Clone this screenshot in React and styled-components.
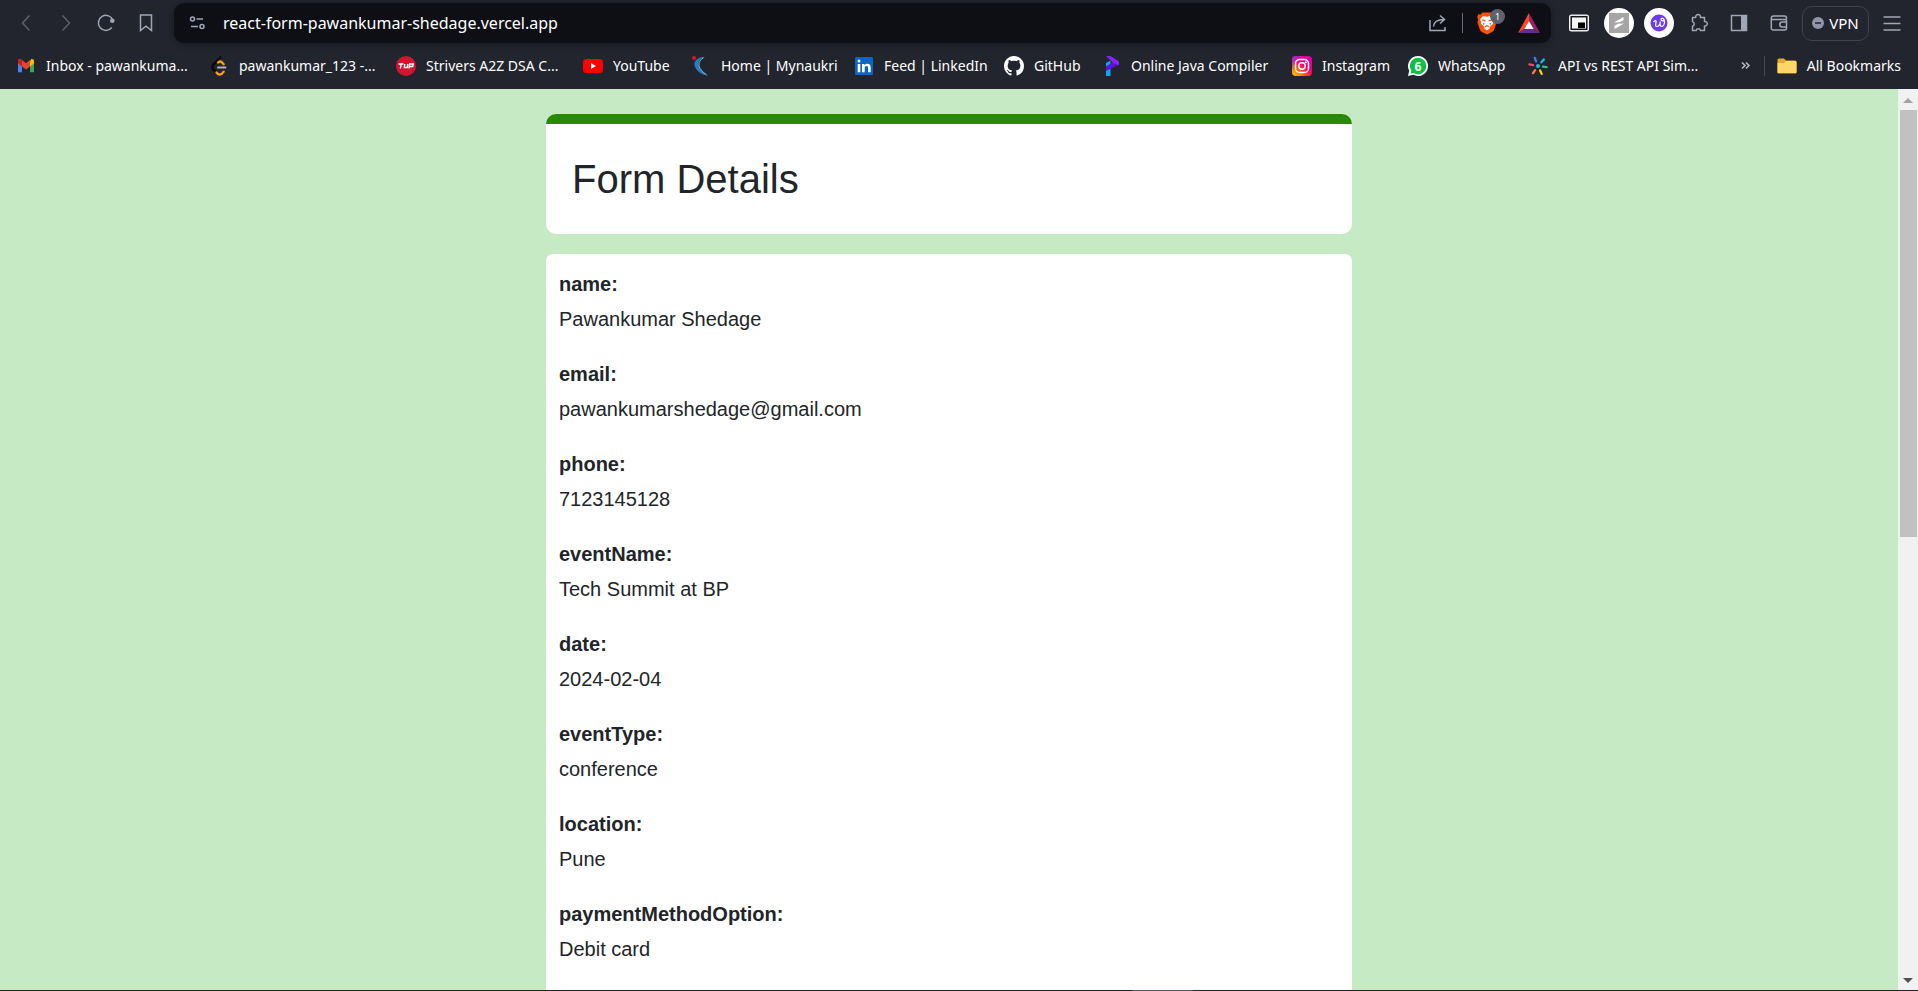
import React from "react";
import styled, { createGlobalStyle } from "styled-components";

const GlobalStyle = createGlobalStyle`
  * { box-sizing: border-box; }
  body {
    margin: 0;
    background: #c6eac4;
    color: #212529;
    font-family: "Liberation Sans", Arial, sans-serif;
  }
  button, input { font: inherit; color: inherit; }
`;

const Screen = styled.div`
  display: flex;
  flex-direction: column;
  height: 100vh;
  overflow: hidden;
`;

/* Browser chrome */

const Chrome = styled.header`
  flex: none;
  display: flex;
  flex-direction: column;
  height: 89px;
  background: #22252d;
  color: #fff;
  font-family: "Noto Sans", "Open Sans", sans-serif;
`;

const Toolbar = styled.div`
  display: flex;
  align-items: center;
  height: 46px;
  padding: 0 6px;
`;

const IconButton = styled.button`
  flex: none;
  display: flex;
  align-items: center;
  justify-content: center;
  width: ${(p) => p.$width || 40}px;
  height: 36px;
  padding: 0;
  border: 0;
  background: none;
  color: ${(p) => (p.$dim ? "#5c6069" : "#a0a6b5")};
`;

const AddressBar = styled.div`
  flex: 1;
  display: flex;
  align-items: center;
  height: 40px;
  margin: 0 8px;
  border-radius: 10px;
  background: #0d0f14;
  box-shadow: 0 1px 6px rgba(0, 0, 0, 0.4);
`;

const AddressInput = styled.input`
  flex: 1;
  min-width: 0;
  padding: 0;
  border: 0;
  outline: 0;
  background: none;
  font-size: 16px;
  line-height: 24px;
`;

const Divider = styled.span`
  flex: none;
  width: 1px;
  height: ${(p) => p.$height}px;
  margin: 0 ${(p) => p.$gap}px;
  background: ${(p) => p.$color};
`;

const ShieldButton = styled(IconButton)`
  position: relative;
`;

const Badge = styled.span`
  position: absolute;
  top: 4px;
  right: 2px;
  width: 15px;
  height: 15px;
  border-radius: 50%;
  background: #5e616e;
  color: #fff;
  font-size: 9px;
  line-height: 15px;
  text-align: center;
`;

const ExtensionDisc = styled.span`
  display: flex;
  align-items: center;
  justify-content: center;
  width: 30px;
  height: 30px;
  border-radius: 50%;
  background: #fff;
`;

const VpnButton = styled.button`
  flex: none;
  display: flex;
  align-items: center;
  justify-content: center;
  gap: 5px;
  width: 67px;
  height: 35px;
  margin: 0 3px;
  padding: 0;
  border: 1px solid #3f434d;
  border-radius: 10px;
  background: none;
  font-size: 15px;
`;

const BookmarksBar = styled.nav`
  display: flex;
  align-items: center;
  height: 40px;
  padding: 0 17px 0 16px;
  font-size: 14px;
  line-height: 20px;
`;

const BookmarkLink = styled.a`
  flex: none;
  display: flex;
  align-items: center;
  gap: 10px;
  width: ${(p) => (p.$width ? `${p.$width}px` : "auto")};
  color: inherit;
  text-decoration: none;
  white-space: nowrap;
  svg { flex: none; }
`;

const Spacer = styled.span`
  flex: 1;
`;

/* Page */

const Viewport = styled.div`
  flex: 1;
  display: flex;
  min-height: 0;
`;

const Page = styled.main`
  flex: 1;
  display: flex;
  flex-direction: column;
  align-items: center;
  gap: 20px;
  padding: 25px 16px 0;
  overflow: hidden;
  background: #c6eac4;
`;

const TitleCard = styled.section`
  flex: none;
  width: 100%;
  max-width: 806px;
  padding: 31px 26px;
  border-top: 10px solid #288a07;
  border-radius: 10px;
  background: #fff;
`;

const Title = styled.h1`
  margin: 0;
  font-size: 40px;
  font-weight: 400;
  line-height: 48px;
`;

const DetailsCard = styled.dl`
  flex: none;
  width: 100%;
  max-width: 806px;
  margin: 0;
  padding: 15px 13px 70px;
  border-radius: 7px;
  background: #fff;
  font-size: 20px;
  line-height: 30px;
`;

const Field = styled.div`
  margin-bottom: 25px;
`;

const FieldName = styled.dt`
  margin-bottom: 5px;
  font-weight: 700;
`;

const FieldValue = styled.dd`
  margin: 0;
`;

const ScrollTrack = styled.div`
  flex: none;
  display: flex;
  flex-direction: column;
  align-items: center;
  width: 20px;
  background: #f1f1f1;
`;

const ScrollButton = styled.button`
  display: flex;
  align-items: center;
  justify-content: center;
  width: 20px;
  height: 21px;
  padding: 0;
  border: 0;
  background: none;
  color: ${(p) => (p.$dim ? "#a3a3a3" : "#505050")};
`;

const ScrollArea = styled.div`
  flex: 1;
  width: 17px;
`;

const ScrollThumb = styled.div`
  height: calc(50% - 3px);
  background: #c1c1c1;
`;

const TaskbarEdge = styled.footer`
  flex: none;
  display: flex;
  height: 1px;
  background: #202225;
`;

const TaskbarActive = styled.span`
  width: 61px;
  margin-left: 59%;
  background: #55575a;
`;

const Svg = ({ size = 20, children, ...rest }) => (
  <svg width={size} height={size} viewBox={`0 0 ${size} ${size}`} fill="none" aria-hidden="true" {...rest}>
    {children}
  </svg>
);

const line = { stroke: "currentColor", strokeWidth: 1.5, fill: "none" };

const BackIcon = () => <Svg><path d="M13.5 2.5 6.5 10l7 7.5" {...line} /></Svg>;
const ForwardIcon = () => <Svg><path d="M6.5 2.5l7 7.5-7 7.5" {...line} /></Svg>;
const ReloadIcon = () => (
  <Svg>
    <path d="M15.8 14.5A7.5 7.5 0 1 1 17 7.5" {...line} />
    <circle cx="16.3" cy="7.8" r="2.3" fill="currentColor" />
  </Svg>
);
const SaveIcon = () => <Svg><path d="M4.5 2h11v15.500L10 13.200l-5.500 4.300z" {...line} /></Svg>;
const TuneIcon = () => (
  <Svg>
    <circle cx="3.500" cy="6" r="2" {...line} />
    <path d="M7.500 6H14M2 13.500H9" {...line} />
    <circle cx="13" cy="13.500" r="2" {...line} />
  </Svg>
);
const ShareIcon = () => (
  <Svg>
    <path d="M2 7v10.5h15V14M5.5 13.5C5.8 9 9 6.5 16 6.5M12 2.5l4.5 4-4.5 4" {...line} />
  </Svg>
);
const BraveIcon = () => (
  <Svg size={24}>
    <path d="M7.500 1.500h9l2 2 2.300-.3 1 3-1 2.300.8 2.700-2.500 7.500q-.5 1.300-2 2.200L12 23.500l-5.100-2.600q-1.500-.9-2-2.200L2.400 11.200l.8-2.700-1-2.300 1-3 2.300.3z" fill="#fb5009" />
    <path d="m8 5 4 .8L16 5l3 3.500-1.200 2.200.4 2.100-3.700 3.200.2 1.500L12 19.600l-2.700-2.100.2-1.500-3.700-3.200.4-2.100L5 8.500z" fill="#fff" />
    <path d="m7 9 3.500.8M17 9l-3.500.8M12 14.500l-2 1.400M12 14.500l2 1.400M9 12l-.6 1.500M15 12l.6 1.500" stroke="#fb5009" strokeWidth="1.200" />
  </Svg>
);
const RewardsIcon = () => (
  <Svg size={24}>
    <path d="M12 2 1 22l6.500-4L12 10z" fill="#ff4724" />
    <path d="m12 2 11 20-6.500-4L12 10z" fill="#9e1f63" />
    <path d="M1 22h22l-6.500-4h-9z" fill="#662d91" />
    <path d="m12 10 4.700 8H7.300z" fill="#fff" />
  </Svg>
);
const PipIcon = () => (
  <Svg size={22}>
    <rect x="1" y="2.500" width="20" height="17" rx="2.500" fill="#f5f5f5" />
    <rect x="3.200" y="4.700" width="15.600" height="12.600" fill="#f5f5f5" stroke="#15171c" strokeWidth="1.500" />
    <rect x="10" y="10.500" width="7" height="5.500" fill="#000" />
  </Svg>
);
const StripeIcon = () => (
  <Svg>
    <rect width="20" height="20" fill="#a5a5a5" />
    <path d="M5 9.500 14.500 4v3.200l-3.700 2.100zM15 10.500 5.500 16v-3.200l3.700-2.100z" fill="#fff" />
  </Svg>
);
const SwirlIcon = () => (
  <Svg size={18}>
    <circle cx="9" cy="9" r="8.500" fill="#6c3ce9" />
    <path d="M3.500 8.200C5 6 6.500 6 6 8.500c-.5 2.200-.8 4 .8 4 2 0 3.200-2.500 3.500-5-.4 2.500-.5 4.800 1.200 4.800 2 0 3.300-2.500 3-5.300-.3-2.800-3.300-3.500-3.500-1.800-.1 1.300 1.500 2 3.200 1.500" stroke="#fff" strokeWidth="1.200" />
  </Svg>
);
const PuzzleIcon = () => (
  <Svg>
    <path d="M3.500 4.500h3.300a2.400 2.400 0 1 1 4.600 0h4.100v4a2.300 2.300 0 1 1 0 4.500v4.500h-4a2.200 2.200 0 0 0-4.300 0H3.500v-4.300a2.400 2.400 0 0 0 0-4.600z" {...line} strokeLinejoin="round" />
  </Svg>
);
const PanelIcon = () => (
  <Svg>
    <rect x="2.500" y="2.500" width="15" height="15" {...line} />
    <rect x="12" y="2" width="6" height="16" fill="currentColor" />
  </Svg>
);
const WalletIcon = () => (
  <Svg>
    <path d="M17.500 6.500v-1.500a2 2 0 0 0-2-2h-11a2.200 2.200 0 0 0-2.200 2.200v9.800a2 2 0 0 0 2 2h11.200a2 2 0 0 0 2-2v-7a1.500 1.500 0 0 0-1.500-1.500H3M17.500 9h-4.200a2.500 2.500 0 0 0 0 5h4.200" {...line} />
  </Svg>
);
const BlockedIcon = () => (
  <Svg size={12}>
    <circle cx="6" cy="6" r="6" fill="#9295a8" />
    <path d="M3 6h6" stroke="#22252d" strokeWidth="1.500" />
  </Svg>
);
const MenuIcon = () => <Svg><path d="M1.500 4h17M1.500 10.500h17M1.500 17h17" {...line} /></Svg>;

const GmailIcon = () => (
  <Svg>
    <path d="M2 5v11.200h4V8z" fill="#4285f4" />
    <path d="M14 8v8.200h4V5z" fill="#34a853" />
    <path d="M14 5.500v5l4-3V5c0-2-2-2.500-3-1.700z" fill="#fbbc04" />
    <path d="M2 7.500V5c0-2 2-2.500 3-1.700l5 4 4-3.200v6.400l-4 3-4-3z" fill="#ea4335" />
    <path d="M2 5v2.500l4 3V4.100L5 3.300C4 2.500 2 3 2 5z" fill="#c5221f" />
  </Svg>
);
const LeetCodeIcon = () => (
  <Svg>
    <path d="M12 .8 4.500 8.500q-2.200 2.500 0 5L7.500 16.700" stroke="#070707" strokeWidth="2.300" />
    <path d="M9 6.500q2-1.800 3.700-.3l2 2M7.500 16.500q3.500 4.500 7.200-.8" stroke="#ffa116" strokeWidth="2.300" strokeLinecap="round" />
    <path d="M9 11.500h7.500" stroke="#b3b3b3" strokeWidth="2" strokeLinecap="round" />
  </Svg>
);
const TufIcon = () => (
  <Svg>
    <circle cx="10" cy="10" r="10" fill="#d5152f" />
    <path d="M2.500 8h5M5.200 8l-.8 4.500M8.800 8l-.5 3.500h3L11.800 8M13 12.500l.7-4.500h3.500l-.5 2.500h-3" stroke="#fff" strokeWidth="1.400" />
  </Svg>
);
const YouTubeIcon = () => (
  <Svg>
    <rect y="3" width="20" height="14" rx="3.500" fill="#f00" />
    <path d="m8 7 5 3-5 3z" fill="#fff" />
  </Svg>
);
const NaukriIcon = () => (
  <Svg>
    <path d="M14 .8C6 1 1 6 4.500 12c2.500 4 6.500 7 12.500 7.700C11 16 7.500 11.500 7.300 8 7.200 5 10 2.500 14 .8z" fill="#1f7fc4" />
    <path d="M12.500 1.800C8 4.500 6.800 8.500 9 12.300q2 3.500 6.500 6.500" stroke="#a8c8e4" strokeWidth=".8" />
    <circle cx="3" cy="2" r="2" fill="#e8121d" />
  </Svg>
);
const LinkedInIcon = () => (
  <Svg>
    <rect x="1" y="1" width="18" height="18" rx="1" fill="#0a66c2" />
    <path d="M3.700 8h2.600v8.300H3.700zM8 8h2.500v1.200c.8-1.200 2-1.500 3-1.500 2.300 0 3.200 1.500 3.200 4v4.600h-2.600v-4.300c0-1.200-.3-2.100-1.500-2.100-1.300 0-1.900.9-1.900 2.200v4.200H8z" fill="#fff" />
    <circle cx="5" cy="5" r="1.500" fill="#fff" />
  </Svg>
);
const GitHubIcon = () => (
  <svg width="20" height="20" viewBox="0 0 16 16" fill="#fff" aria-hidden="true">
    <path d="M8 0C3.580 0 0 3.580 0 8c0 3.540 2.290 6.530 5.470 7.590.4.070.55-.17.55-.38 0-.19-.01-.82-.01-1.490-2.010.37-2.530-.49-2.690-.94-.09-.23-.48-.94-.82-1.130-.28-.15-.68-.52-.01-.53.63-.01 1.080.58 1.230.82.72 1.210 1.870.87 2.330.66.07-.52.28-.87.51-1.070-1.780-.2-3.640-.89-3.640-3.950 0-.87.31-1.590.82-2.150-.08-.2-.36-1.020.08-2.120 0 0 .67-.21 2.200.82.64-.18 1.320-.27 2-.27s1.360.09 2 .27c1.530-1.040 2.200-.82 2.200-.82.44 1.100.16 1.920.08 2.120.51.56.82 1.270.82 2.150 0 3.070-1.870 3.750-3.650 3.950.29.25.54.73.54 1.480 0 1.070-.01 1.930-.01 2.200 0 .21.15.46.55.38A8.010 8.010 0 0 0 16 8c0-4.420-3.580-8-8-8z" />
  </svg>
);
const ProgramizIcon = () => (
  <Svg>
    <path d="M5 7l4.500-2.500v15.500H5z" fill="#0ea5f5" />
    <path d="M5 15v-4.500L12 6l6 .5V8.500z" fill="#5a12dc" />
    <path d="M5 0h4.500L18 5.500V9l-5-1.500z" fill="#8a23f5" />
  </Svg>
);
const InstagramIcon = () => (
  <Svg>
    <defs>
      <linearGradient id="insta" x1="0" y1="1" x2="1" y2="0">
        <stop offset="0" stopColor="#ffd600" />
        <stop offset=".3" stopColor="#ff6a00" />
        <stop offset=".55" stopColor="#ff0169" />
        <stop offset="1" stopColor="#d300c5" />
      </linearGradient>
      <radialGradient id="instaCorner" cx="0" cy="0" r=".7">
        <stop offset="0" stopColor="#7638fa" />
        <stop offset="1" stopColor="#d300c5" stopOpacity="0" />
      </radialGradient>
    </defs>
    <rect width="20" height="20" rx="4" fill="url(#insta)" />
    <rect width="20" height="20" rx="4" fill="url(#instaCorner)" />
    <rect x="3.500" y="3.500" width="13" height="13" rx="4" stroke="#fff" strokeWidth="1.500" />
    <circle cx="10" cy="10" r="3.200" stroke="#fff" strokeWidth="1.500" />
    <circle cx="13.800" cy="6.200" r="1" fill="#fff" />
  </Svg>
);
const WhatsAppIcon = () => (
  <Svg>
    <path d="M10 0a10 10 0 1 1-4.700 18.800L0 20l1.200-5.200A10 10 0 0 1 10 0z" fill="#fff" />
    <path d="M10 1.800a8.200 8.200 0 1 1-4.300 15.200L2.600 17.600l.7-3A8.200 8.200 0 0 1 10 1.800z" fill="#0bc144" />
    <text x="10" y="14.500" textAnchor="middle" fontFamily="Open Sans, sans-serif" fontWeight="700" fontSize="12" fill="#fff">6</text>
  </Svg>
);
const burst = [
  ["#23b9ec", 42], ["#3dbb84", 98], ["#ffd400", 155], ["#ff7a3d", 215], ["#f5476b", 280], ["#3f7ff0", 338],
];
const BurstIcon = () => (
  <Svg>
    <circle cx="10" cy="10" r="2" fill="#14c3cf" />
    {burst.map(([color, angle]) => (
      <path key={angle} d="M10 5V1.300" stroke={color} strokeWidth="2.300" strokeLinecap="round" transform={`rotate(${angle} 10 10)`} />
    ))}
  </Svg>
);
const FolderIcon = () => (
  <Svg>
    <path d="M.5 4a1.500 1.500 0 0 1 1.500-1.500h5l2 2h9a1.500 1.500 0 0 1 1.500 1.500v10a1.500 1.500 0 0 1-1.500 1.500H2A1.500 1.500 0 0 1 .5 16z" fill="#e8a92e" />
    <path d="M.5 7h6.500l2-2H18a1.500 1.500 0 0 1 1.500 1.500V16a1 1 0 0 1-1.500 1H2a1 1 0 0 1-1.500-1z" fill="#ffd766" />
  </Svg>
);
const MoreIcon = () => (
  <Svg size={10}><path d="m1 1.500 3 3-3 3M5 1.500l3 3-3 3" stroke="#b4b8c4" strokeWidth="1.600" /></Svg>
);

const bookmarks = [
  { label: "Inbox - pawankuma...", icon: GmailIcon, width: 193 },
  { label: "pawankumar_123 -...", icon: LeetCodeIcon, width: 187 },
  { label: "Strivers A2Z DSA C...", icon: TufIcon, width: 187 },
  { label: "YouTube", icon: YouTubeIcon, width: 108 },
  { label: "Home | Mynaukri", icon: NaukriIcon, width: 163 },
  { label: "Feed | LinkedIn", icon: LinkedInIcon, width: 150 },
  { label: "GitHub", icon: GitHubIcon, width: 97 },
  { label: "Online Java Compiler", icon: ProgramizIcon, width: 191 },
  { label: "Instagram", icon: InstagramIcon, width: 116 },
  { label: "WhatsApp", icon: WhatsAppIcon, width: 120 },
  { label: "API vs REST API Sim...", icon: BurstIcon, width: 172 },
];

const details = [
  ["name", "Pawankumar Shedage"],
  ["email", "pawankumarshedage@gmail.com"],
  ["phone", "7123145128"],
  ["eventName", "Tech Summit at BP"],
  ["date", "2024-02-04"],
  ["eventType", "conference"],
  ["location", "Pune"],
  ["paymentMethodOption", "Debit card"],
];

export default function App() {
  return (
    <Screen>
      <GlobalStyle />
      <Chrome>
        <Toolbar>
          <IconButton $dim aria-label="Back"><BackIcon /></IconButton>
          <IconButton $dim aria-label="Forward"><ForwardIcon /></IconButton>
          <IconButton aria-label="Reload"><ReloadIcon /></IconButton>
          <IconButton aria-label="Bookmark this page"><SaveIcon /></IconButton>
          <AddressBar>
            <IconButton $width={49} aria-label="Site settings"><TuneIcon /></IconButton>
            <AddressInput aria-label="Address" defaultValue="react-form-pawankumar-shedage.vercel.app" />
            <IconButton aria-label="Share"><ShareIcon /></IconButton>
            <Divider $height={20} $gap={4} $color="#6b6e76" />
            <ShieldButton aria-label="Shields"><BraveIcon /><Badge>1</Badge></ShieldButton>
            <IconButton $width={44} aria-label="Rewards"><RewardsIcon /></IconButton>
          </AddressBar>
          <IconButton aria-label="Picture in picture"><PipIcon /></IconButton>
          <IconButton aria-label="Stripe extension"><ExtensionDisc><StripeIcon /></ExtensionDisc></IconButton>
          <IconButton aria-label="Writing extension"><ExtensionDisc><SwirlIcon /></ExtensionDisc></IconButton>
          <IconButton aria-label="Extensions"><PuzzleIcon /></IconButton>
          <IconButton aria-label="Side panel"><PanelIcon /></IconButton>
          <IconButton aria-label="Wallet"><WalletIcon /></IconButton>
          <VpnButton><BlockedIcon />VPN</VpnButton>
          <IconButton aria-label="Menu"><MenuIcon /></IconButton>
        </Toolbar>
        <BookmarksBar>
          {bookmarks.map(({ label, icon: Icon, width }) => (
            <BookmarkLink key={label} href="#" $width={width}><Icon /><span>{label}</span></BookmarkLink>
          ))}
          <Spacer />
          <IconButton $width={12} aria-label="More bookmarks"><MoreIcon /></IconButton>
          <Divider $height={20} $gap={12} $color="#44474f" />
          <BookmarkLink href="#"><FolderIcon /><span>All Bookmarks</span></BookmarkLink>
        </BookmarksBar>
      </Chrome>
      <Viewport>
        <Page>
          <TitleCard><Title>Form Details</Title></TitleCard>
          <DetailsCard>
            {details.map(([name, value]) => (
              <Field key={name}>
                <FieldName>{name}:</FieldName>
                <FieldValue>{value}</FieldValue>
              </Field>
            ))}
          </DetailsCard>
        </Page>
        <ScrollTrack>
          <ScrollButton $dim aria-label="Scroll up">
            <Svg size={10}><path d="M0 8 5 3l5 5z" fill="currentColor" /></Svg>
          </ScrollButton>
          <ScrollArea><ScrollThumb /></ScrollArea>
          <ScrollButton aria-label="Scroll down">
            <Svg size={10}><path d="m0 3 5 5 5-5z" fill="currentColor" /></Svg>
          </ScrollButton>
        </ScrollTrack>
      </Viewport>
      <TaskbarEdge><TaskbarActive /></TaskbarEdge>
    </Screen>
  );
}
